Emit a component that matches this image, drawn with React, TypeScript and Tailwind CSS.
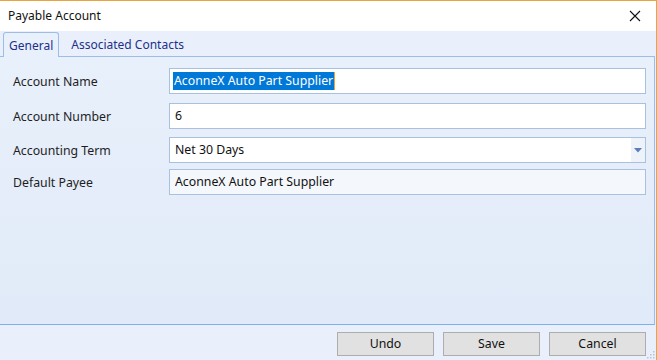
import React from "react";

const font = { fontFamily: '"Noto Sans", "Open Sans", sans-serif' };

function Row({ label, top, children }: { label: string; top: string; children: React.ReactNode }) {
  return (
    <div className={`flex items-center ${top}`}>
      <div className="w-[169px] pl-[13px] pt-[2px] text-[12.3px] text-[#1e1e1e]">{label}</div>
      {children}
    </div>
  );
}

export default function App() {
  return (
    <div className="w-[657px] h-[360px] overflow-hidden relative flex flex-col border-t border-r border-[#eaa43c] bg-[#e9f0fb]" style={font}>
      <div className="h-[30px] bg-white flex items-center justify-between pl-[8px] pr-[10px] shrink-0">
        <span className="text-[12px] text-[#111]">Payable Account</span>
        <svg width="12" height="12" viewBox="0 0 12 12" className="mr-[5px]">
          <path d="M1 1 L11 11 M11 1 L1 11" stroke="#111" strokeWidth="1.1" />
        </svg>
      </div>
      <div className="h-[25px] flex items-end pl-[3px] shrink-0 relative z-10">
        <div className="h-[25px] px-[5px] pt-[2px] border border-b-0 border-[#9ebde6] rounded-t-[3px] bg-[#e8f0fb] flex items-center text-[12px] text-[#22308c] -mb-px">
          General
        </div>
        <div className="h-[24px] px-[12px] pt-[2px] flex items-center text-[12px] text-[#22308c]">Associated Contacts</div>
      </div>
      <div className="h-[269px] shrink-0 mr-[1px] border-t border-r border-b border-t-[#9ebde6] border-r-[#9ebde6] border-b-[#80b0ea] bg-gradient-to-b from-[#e8f0fb] to-[#e1eaf8]">
        <Row label="Account Name" top="mt-[11px]">
          <div className="w-[477px] h-[26px] bg-white border border-[#a9c0df] flex items-center pl-[3px]">
            <span className="bg-[#0078d7] text-white text-[12.3px] leading-[18px] px-[1px] border-r border-[#e8a33d]">AconneX Auto Part Supplier</span>
          </div>
        </Row>
        <Row label="Account Number" top="mt-[9px]">
          <div className="w-[477px] h-[26px] bg-white border border-[#a9c0df] flex items-center pl-[5px] text-[12.3px] text-[#111]">6</div>
        </Row>
        <Row label="Accounting Term" top="mt-[8px]">
          <div className="w-[477px] h-[26px] bg-white border border-[#a9c0df] flex items-center text-[12.3px] text-[#111]">
            <span className="flex-1 pl-[5px]">Net 30 Days</span>
            <div className="w-[14px] h-full bg-[#eef3fa] flex items-center justify-center">
              <svg width="8" height="5" viewBox="0 0 8 5">
                <path d="M0 0 H8 L4 4.5 Z" fill="#5b7eb6" />
              </svg>
            </div>
          </div>
        </Row>
        <Row label="Default Payee" top="mt-[6px]">
          <div className="w-[477px] h-[26px] bg-[#f4f8fd] border border-[#a9c0df] flex items-center pl-[5px] text-[12.3px] text-[#111]">AconneX Auto Part Supplier</div>
        </Row>
      </div>
      <div className="flex-1 flex justify-end items-start pt-[7px] pr-[10px] gap-[9px] text-[12.3px] text-[#111]">
        <button className="w-[97px] h-[24px] bg-[#e1e1e1] border border-[#adadad]">Undo</button>
        <button className="w-[97px] h-[24px] bg-[#e1e1e1] border border-[#adadad]">Save</button>
        <button className="w-[97px] h-[24px] bg-[#e1e1e1] border border-[#adadad]">Cancel</button>
      </div>
      <svg width="8" height="8" viewBox="0 0 8 8" className="absolute right-[1px] bottom-[1px]">
        <rect x="6" y="0" width="1.5" height="1.5" fill="#bfc4cc" />
        <rect x="3" y="3" width="1.5" height="1.5" fill="#bfc4cc" />
        <rect x="6" y="3" width="1.5" height="1.5" fill="#bfc4cc" />
        <rect x="0" y="6" width="1.5" height="1.5" fill="#bfc4cc" />
        <rect x="3" y="6" width="1.5" height="1.5" fill="#bfc4cc" />
        <rect x="6" y="6" width="1.5" height="1.5" fill="#bfc4cc" />
      </svg>
    </div>
  );
}
